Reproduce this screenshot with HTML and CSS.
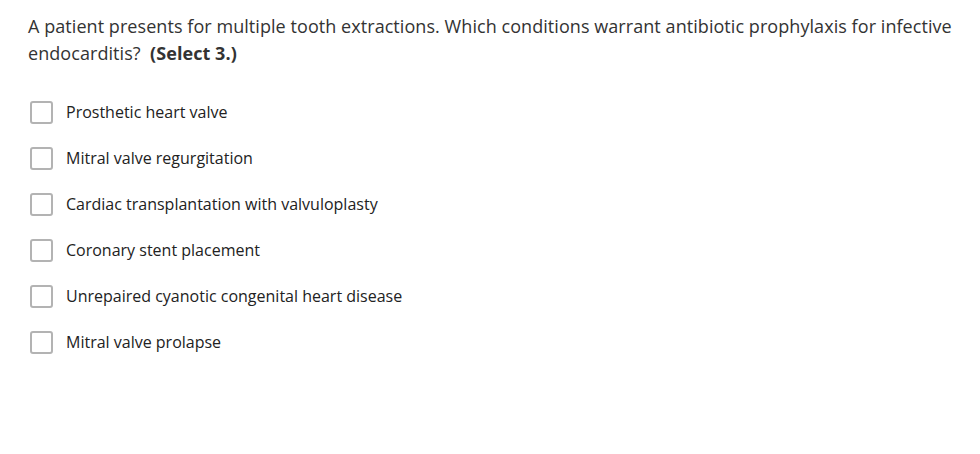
FILE: index.html
```html
<!DOCTYPE html>
<html lang="en">
<head>
<meta charset="utf-8">
<title>Question</title>
<link rel="stylesheet" href="styles.css">
</head>
<body>
<div class="question">
  <p class="stem">A patient presents for multiple tooth extractions. Which conditions warrant antibiotic prophylaxis for infective endocarditis?&nbsp; <strong class="hint">(Select 3.)</strong></p>
  <ul class="options">
    <li class="option"><span class="box"></span><span class="label">Prosthetic heart valve</span></li>
    <li class="option"><span class="box"></span><span class="label">Mitral valve regurgitation</span></li>
    <li class="option"><span class="box"></span><span class="label">Cardiac transplantation with valvuloplasty</span></li>
    <li class="option"><span class="box"></span><span class="label">Coronary stent placement</span></li>
    <li class="option"><span class="box"></span><span class="label">Unrepaired cyanotic congenital heart disease</span></li>
    <li class="option"><span class="box"></span><span class="label">Mitral valve prolapse</span></li>
  </ul>
</div>
</body>
</html>
```
FILE: styles.css
```css
html, body {
  margin: 0;
  padding: 0;
  background: #ffffff;
}
body {
  font-family: "Open Sans", "Noto Sans", "Liberation Sans", sans-serif;
  color: #333333;
}
.question {
  padding: 13px 0 0 28px;
  width: 940px;
}
.stem {
  margin: 0;
  font-size: 18px;
  line-height: 27px;
  letter-spacing: 0.06px;
}
.hint {
  font-weight: 700;
}
.options {
  list-style: none;
  margin: 22px 0 0 0;
  padding: 0;
}
.option {
  display: flex;
  align-items: center;
  height: 46px;
  gap: 13px;
  padding-left: 2px;
}
.box {
  width: 19px;
  height: 19px;
  border: 2px solid #b3b3b3;
  border-radius: 3px;
  flex: none;
}
.label {
  font-size: 16px;
  color: #222222;
}
```
